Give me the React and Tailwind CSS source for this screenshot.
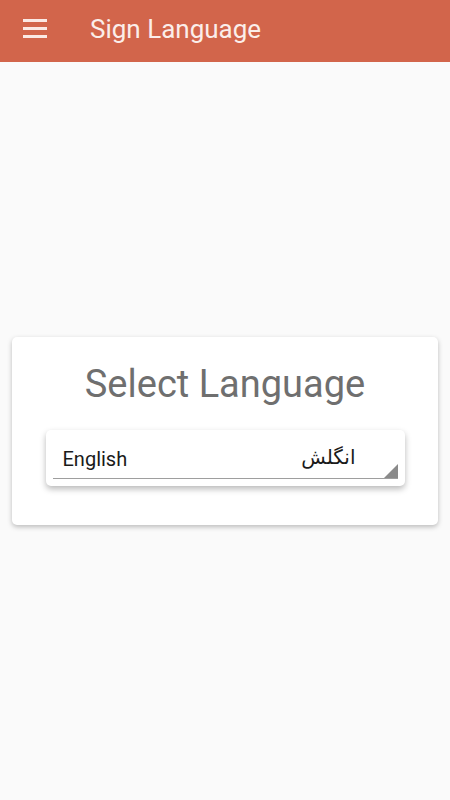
import React from "react";

export default function App() {
  return (
    <div className="w-[450px] h-[800px] bg-[#fafafa] flex flex-col" style={{ fontFamily: "Roboto, 'Noto Sans', sans-serif" }}>
      <div className="h-[62px] bg-[#d2654b] flex items-center shrink-0">
        <div className="w-[24px] ml-[23px] -mt-[6px] flex flex-col gap-[5px]">
          <div className="h-[3px] bg-[#fbe9e4]"></div>
          <div className="h-[3px] bg-[#fbe9e4]"></div>
          <div className="h-[3px] bg-[#fbe9e4]"></div>
        </div>
        <div className="ml-[43px] text-[26px] text-[#fbeeea] leading-none -mt-[4px]">Sign Language</div>
      </div>
      <div className="flex-1 flex items-center">
        <div className="mx-[12px] w-[426px] h-[188px] bg-white rounded-[5px] shadow-[0_2px_5px_rgba(0,0,0,0.25)] flex flex-col items-center">
          <div className="mt-[25px] text-[38px] leading-[44px] text-[#6f6f6f]">Select Language</div>
          <div className="mt-[24px] w-[359px] h-[56px] bg-white rounded-[5px] shadow-[0_3px_6px_rgba(0,0,0,0.28)] relative px-[7px]">
            <div className="h-[49px] border-b border-[#9e9e9e] flex items-center justify-between pl-[10px] pr-[42px]">
              <span className="text-[20px] text-[#1a1a1a] mt-[10px]">English</span>
              <span className="text-[20px] text-[#1a1a1a] mt-[6px]" style={{ fontFamily: "'DejaVu Sans', 'Noto Sans', sans-serif" }}>انگلش</span>
            </div>
            <div className="absolute right-[7px] top-[34px] w-0 h-0 border-l-[14px] border-l-transparent border-b-[14px] border-b-[#8a8a8a]"></div>
          </div>
        </div>
      </div>
    </div>
  );
}
